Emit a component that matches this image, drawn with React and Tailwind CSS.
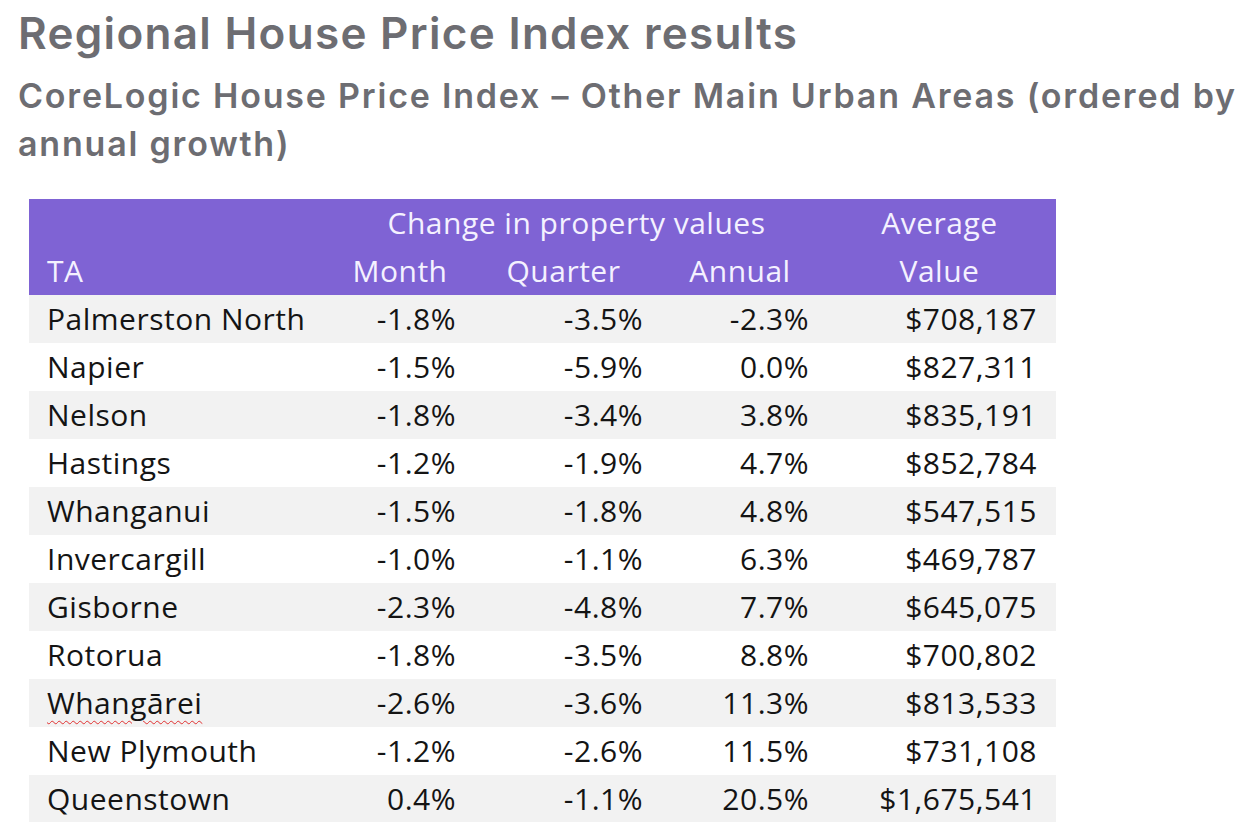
import React from 'react'

const ROWS = [
  ['Palmerston North', '-1.8%', '-3.5%', '-2.3%', '$708,187'],
  ['Napier', '-1.5%', '-5.9%', '0.0%', '$827,311'],
  ['Nelson', '-1.8%', '-3.4%', '3.8%', '$835,191'],
  ['Hastings', '-1.2%', '-1.9%', '4.7%', '$852,784'],
  ['Whanganui', '-1.5%', '-1.8%', '4.8%', '$547,515'],
  ['Invercargill', '-1.0%', '-1.1%', '6.3%', '$469,787'],
  ['Gisborne', '-2.3%', '-4.8%', '7.7%', '$645,075'],
  ['Rotorua', '-1.8%', '-3.5%', '8.8%', '$700,802'],
  ['Whangārei', '-2.6%', '-3.6%', '11.3%', '$813,533'],
  ['New Plymouth', '-1.2%', '-2.6%', '11.5%', '$731,108'],
  ['Queenstown', '0.4%', '-1.1%', '20.5%', '$1,675,541'],
]

const COLS = 'grid grid-cols-[301px_140px_187px_166px_233px]'

export default function App() {
  return (
    <div className="w-[1247px] h-[822px] overflow-hidden bg-white">
      {/* Headings */}
      <div className="pl-[18px] pt-[6px] font-['Inter',sans-serif] font-semibold text-[#6d6d72]">
        <h1 className="text-[44px] leading-[54px] tracking-[1.3px]">Regional House Price Index results</h1>
        <h2 className="mt-[12px] text-[34px] leading-[48px] tracking-[1.8px]">
          CoreLogic House Price Index – Other Main Urban Areas (ordered by annual growth)
        </h2>
      </div>

      {/* Table */}
      <div className="ml-[29px] mt-[31px] w-[1027px] font-['Open_Sans',sans-serif] text-[30px] tracking-[0.5px] text-[#141414]">
        <div className={`${COLS} bg-[#7f63d4] text-[#f4f1ff] leading-[48px]`}>
          <div />
          <div className="col-span-3 text-center">Change in property values</div>
          <div className="text-center">Average</div>
          <div className="pl-[18px]">TA</div>
          <div className="text-center">Month</div>
          <div className="text-center">Quarter</div>
          <div className="text-center">Annual</div>
          <div className="text-center">Value</div>
        </div>
        {ROWS.map((r, i) => (
          <div key={r[0]} className={`${COLS} leading-[48px] ${i % 2 === 0 ? 'bg-[#f2f2f2]' : 'bg-white'}`}>
            <div className="pl-[18px]">
              {r[0] === 'Whangārei' ? (
                <span className="underline decoration-wavy decoration-[#e03030] decoration-1 underline-offset-[6px]">{r[0]}</span>
              ) : r[0]}
            </div>
            <div className="text-right pr-[14px]">{r[1]}</div>
            <div className="text-right pr-[14px]">{r[2]}</div>
            <div className="text-right pr-[14px]">{r[3]}</div>
            <div className="text-right pr-[19px]">{r[4]}</div>
          </div>
        ))}
      </div>
    </div>
  )
}
